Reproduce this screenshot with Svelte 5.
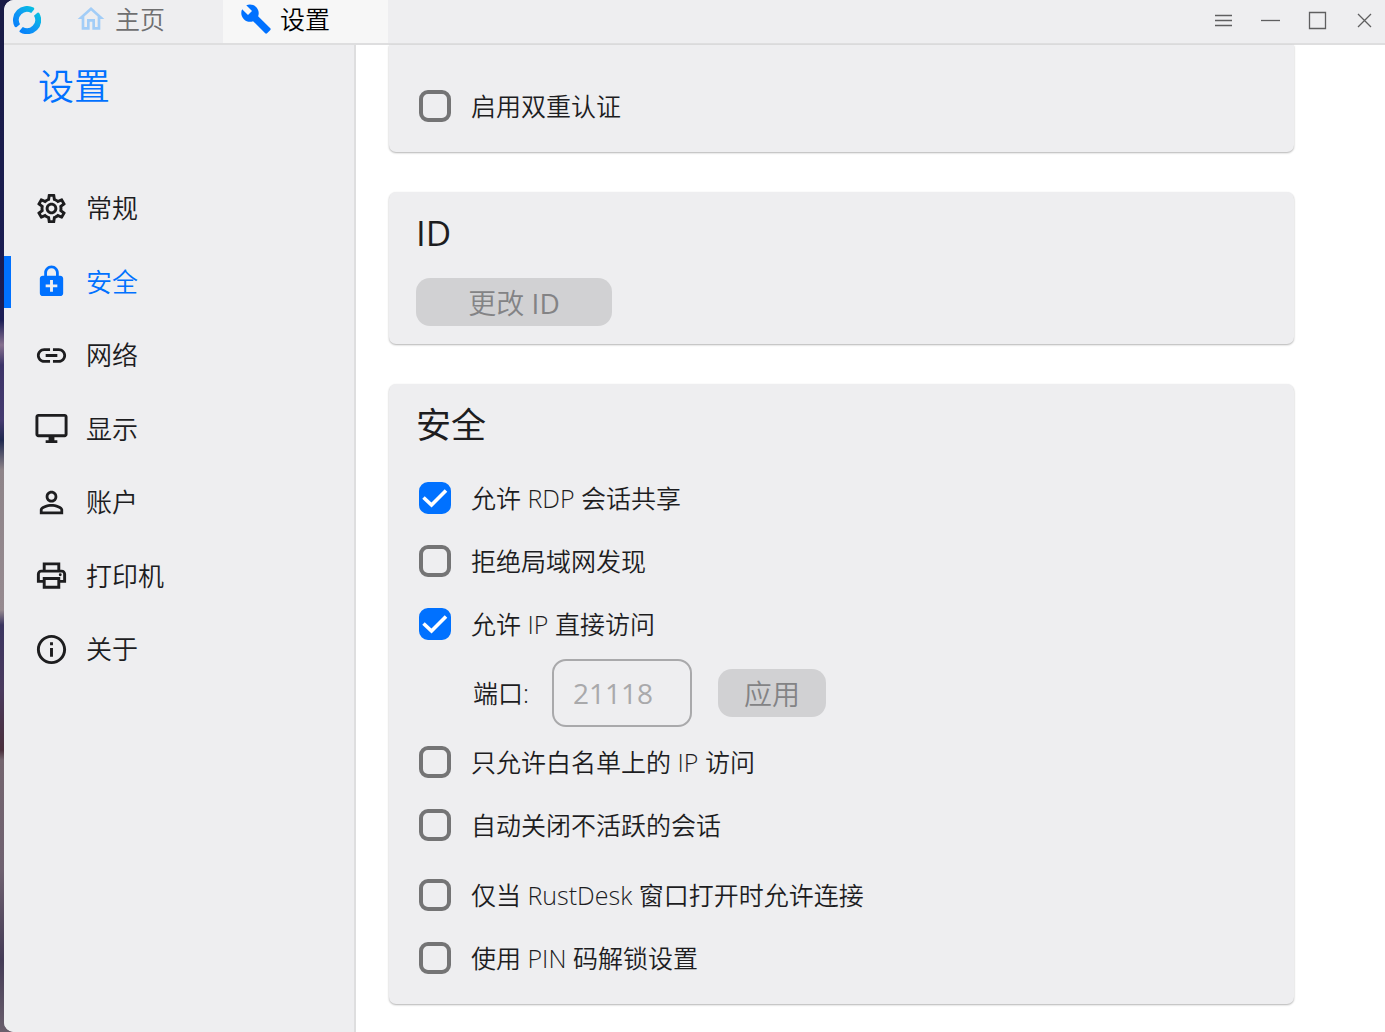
<script lang="ts">
  interface NavItem {
    id: string;
    label: string;
    path: string;
  }

  const navItems: NavItem[] = [
    {
      id: 'general',
      label: '常规',
      path: 'M19.43 12.98c.04-.32.07-.64.07-.98 0-.34-.03-.66-.07-.98l2.11-1.65c.19-.15.24-.42.12-.64l-2-3.46c-.09-.16-.26-.25-.44-.25-.06 0-.12.01-.17.03l-2.49 1c-.52-.4-1.08-.73-1.69-.98l-.38-2.65C14.46 2.18 14.25 2 14 2h-4c-.25 0-.46.18-.49.42l-.38 2.65c-.61.25-1.17.59-1.69.98l-2.49-1c-.06-.02-.12-.03-.18-.03-.17 0-.34.09-.43.25l-2 3.46c-.13.22-.07.49.12.64l2.11 1.65c-.04.32-.07.65-.07.98 0 .33.03.66.07.98l-2.11 1.65c-.19.15-.24.42-.12.64l2 3.46c.09.16.26.25.44.25.06 0 .12-.01.17-.03l2.49-1c.52.4 1.08.73 1.69.98l.38 2.65c.03.24.24.42.49.42h4c.25 0 .46-.18.49-.42l.38-2.65c.61-.25 1.17-.59 1.69-.98l2.49 1c.06.02.12.03.18.03.17 0 .34-.09.43-.25l2-3.46c.12-.22.07-.49-.12-.64l-2.11-1.65zm-1.98-1.71c.04.31.05.52.05.73 0 .21-.02.43-.05.73l-.14 1.13.89.7 1.08.84-.7 1.21-1.27-.51-1.04-.42-.9.68c-.43.32-.84.56-1.25.73l-1.06.43-.16 1.13-.2 1.35h-1.4l-.19-1.35-.16-1.13-1.06-.43c-.43-.18-.83-.41-1.23-.71l-.91-.7-1.06.43-1.27.51-.7-1.21 1.08-.84.89-.7-.14-1.13c-.03-.31-.05-.54-.05-.74s.02-.43.05-.73l.14-1.13-.89-.7-1.08-.84.7-1.21 1.27.51 1.04.42.9-.68c.43-.32.84-.56 1.25-.73l1.06-.43.16-1.13.2-1.35h1.39l.19 1.35.16 1.13 1.06.43c.43.18.83.41 1.23.71l.91.7 1.06-.43 1.27-.51.7 1.21-1.07.85-.89.7.14 1.13zM12 8c-2.21 0-4 1.79-4 4s1.79 4 4 4 4-1.79 4-4-1.79-4-4-4zm0 6c-1.1 0-2-.9-2-2s.9-2 2-2 2 .9 2 2-.9 2-2 2z',
    },
    {
      id: 'security',
      label: '安全',
      path: 'M18 8h-1V6c0-2.76-2.24-5-5-5S7 3.24 7 6v2H6c-1.1 0-2 .9-2 2v10c0 1.1.9 2 2 2h12c1.1 0 2-.9 2-2V10c0-1.1-.9-2-2-2zM8.9 6c0-1.71 1.39-3.1 3.1-3.1s3.1 1.39 3.1 3.1v2H8.9V6zM16 16h-3v3h-2v-3H8v-2h3v-3h2v3h3v2z',
    },
    {
      id: 'network',
      label: '网络',
      path: 'M3.9 12c0-1.71 1.39-3.1 3.1-3.1h4V7H7c-2.76 0-5 2.24-5 5s2.24 5 5 5h4v-1.9H7c-1.71 0-3.1-1.39-3.1-3.1zM8 13h8v-2H8v2zm9-6h-4v1.9h4c1.71 0 3.1 1.39 3.1 3.1s-1.39 3.1-3.1 3.1h-4V17h4c2.76 0 5-2.24 5-5s-2.24-5-5-5z',
    },
    {
      id: 'display',
      label: '显示',
      path: 'M21 2H3c-1.1 0-2 .9-2 2v12c0 1.1.9 2 2 2h7v2H8v2h8v-2h-2v-2h7c1.1 0 2-.9 2-2V4c0-1.1-.9-2-2-2zm0 14H3V4h18v12z',
    },
    {
      id: 'account',
      label: '账户',
      path: 'M12 5.9c1.16 0 2.1.94 2.1 2.1s-.94 2.1-2.1 2.1S9.9 9.16 9.9 8s.94-2.1 2.1-2.1m0 9c2.97 0 6.1 1.46 6.1 2.1v1.1H5.9V17c0-.64 3.13-2.1 6.1-2.1M12 4C9.79 4 8 5.79 8 8s1.79 4 4 4 4-1.79 4-4-1.79-4-4-4zm0 9c-2.67 0-8 1.34-8 4v3h16v-3c0-2.66-5.33-4-8-4z',
    },
    {
      id: 'printer',
      label: '打印机',
      path: 'M19 8h-1V3H6v5H5c-1.66 0-3 1.34-3 3v6h4v4h12v-4h4v-6c0-1.66-1.34-3-3-3zM8 5h8v3H8V5zm8 12v2H8v-4h8v2zm2-2v-2H6v2H4v-4c0-.55.45-1 1-1h14c.55 0 1 .45 1 1v4h-2zM18 10.5a1 1 0 1 0 0 2a1 1 0 1 0 0-2z',
    },
    {
      id: 'about',
      label: '关于',
      path: 'M11 7h2v2h-2zm0 4h2v6h-2zm1-9C6.48 2 2 6.48 2 12s4.48 10 10 10 10-4.48 10-10S17.52 2 12 2zm0 18c-4.41 0-8-3.59-8-8s3.59-8 8-8 8 3.59 8 8-3.59 8-8 8z',
    },
  ];

  let active = $state('security');
  let port = $state('');

  let options = $state({
    twoFactor: false,
    rdp: true,
    denyLan: false,
    directIp: true,
    whitelist: false,
    autoClose: false,
    windowOpen: false,
    pin: false,
  });

  type OptionKey = keyof typeof options;
</script>

{#snippet check(key: OptionKey, label: string)}
  <label class="check">
    <span class="box">
      <input type="checkbox" bind:checked={options[key]} />
      <svg viewBox="0 0 32 32" aria-hidden="true"><path d="M4.5 15.5L12.5 23L27 8.5" /></svg>
    </span>
    <span>{label}</span>
  </label>
{/snippet}

<div class="desktop">
  <div class="window">
    <header class="titlebar">
      <svg class="logo" viewBox="0 0 28 28" aria-hidden="true">
        <defs>
          <linearGradient id="ring" x1="0" y1="1" x2="1" y2="0">
            <stop offset="0" stop-color="#0071ff" />
            <stop offset="0.5" stop-color="#0f9bf3" />
            <stop offset="1" stop-color="#00d2d8" />
          </linearGradient>
        </defs>
        <path
          fill="url(#ring)"
          d="M20.5 1.6A14 14 0 0 0 1.6 20.5Q2.5 21.8 3.7 20.9L7 18.2A8.2 8.2 0 0 1 18.2 7L20.9 3.7Q21.8 2.5 20.5 1.6zM26.2 7A14 14 0 0 1 7 26.2Q5.9 25.4 6.8 24.4L9.8 21A8.2 8.2 0 0 0 21 9.8L24.4 6.8Q25.4 5.9 26.2 7z"
        />
      </svg>
      <nav class="tabs" aria-label="标签">
        <button class="tab">
          <svg viewBox="0 0 24 24" aria-hidden="true">
            <path d="M12 5.69l5 4.5V18h-2v-6H9v6H7v-7.81l5-4.5M12 3L2 12h3v8h6v-6h2v6h6v-8h3L12 3z" />
          </svg>
          主页
        </button>
        <button class="tab current">
          <svg viewBox="0 0 24 24" aria-hidden="true">
            <path d="M22.7 19l-9.1-9.1c.9-2.3.4-5-1.5-6.9-2-2-5-2.4-7.4-1.3L9 6 6 9 1.6 4.7C.4 7.1.9 10.1 2.9 12.1c1.9 1.9 4.6 2.4 6.9 1.5l9.1 9.1c.4.4 1 .4 1.4 0l2.3-2.3c.5-.4.5-1.1.1-1.4z" />
          </svg>
          设置
        </button>
      </nav>
      <div class="controls">
        <button aria-label="菜单">
          <svg viewBox="0 0 20 20"><path d="M2 5.5h17M2 10.5h17M2 15.5h17" /></svg>
        </button>
        <button aria-label="最小化">
          <svg viewBox="0 0 20 20"><path d="M1 10.5h19" /></svg>
        </button>
        <button aria-label="最大化">
          <svg viewBox="0 0 20 20"><path d="M2.5 2.5h16v16h-16z" /></svg>
        </button>
        <button aria-label="关闭">
          <svg viewBox="0 0 20 20"><path d="M4 4l13 13M17 4L4 17" /></svg>
        </button>
      </div>
    </header>

    <div class="body">
      <aside class="sidebar">
        <h1>设置</h1>
        <nav class="menu">
          {#each navItems as item (item.id)}
            <button class="menu-item" class:active={active === item.id} onclick={() => (active = item.id)}>
              <svg viewBox="0 0 24 24" aria-hidden="true"><path d={item.path} /></svg>
              {item.label}
            </button>
          {/each}
        </nav>
      </aside>

      <main class="content">
        <section class="card continued">
          {@render check('twoFactor', '启用双重认证')}
        </section>

        <section class="card">
          <h2>ID</h2>
          <button class="action wide" disabled>更改 <b>ID</b></button>
        </section>

        <section class="card">
          <h2>安全</h2>
          {@render check('rdp', '允许 RDP 会话共享')}
          {@render check('denyLan', '拒绝局域网发现')}
          {@render check('directIp', '允许 IP 直接访问')}
          <div class="port-row">
            <label for="port">端口:</label>
            <input id="port" type="text" placeholder="21118" bind:value={port} />
            <button class="action" disabled={!port}>应用</button>
          </div>
          {@render check('whitelist', '只允许白名单上的 IP 访问')}
          <div class="group">
            {@render check('autoClose', '自动关闭不活跃的会话')}
          </div>
          {@render check('windowOpen', '仅当 RustDesk 窗口打开时允许连接')}
          {@render check('pin', '使用 PIN 码解锁设置')}
        </section>
      </main>
    </div>
  </div>
</div>

<style>
  :global(body) {
    background: #fff;
  }

  .desktop {
    --accent: #0071ff;
    --panel: #eeeef0;
    --text: #1d1d1f;
    box-sizing: border-box;
    min-height: 100vh;
    padding-left: 4px;
    display: flex;
    font-family: 'Open Sans', 'Noto Sans CJK SC', sans-serif;
    font-weight: 350;
    color: var(--text);
    background: linear-gradient(
      #191b45 0,
      #1b1d55 320px,
      #86708f 345px,
      #3c3468 365px,
      #453a70 420px,
      #1f2950 440px,
      #8e8489 470px,
      #968a90 610px,
      #3b3560 625px,
      #4a3a5e 690px,
      #4a2f3c 750px,
      #74656f 760px,
      #6f6170 870px,
      #443b56 960px,
      #6b5f6d 1032px
    );
  }

  button {
    font: inherit;
    color: inherit;
    border: none;
    background: none;
    padding: 0;
    cursor: pointer;
  }

  svg {
    display: block;
    flex: none;
    fill: currentColor;
  }

  .window {
    flex: 1;
    min-width: 0;
    display: flex;
    flex-direction: column;
    background: #fff;
    border-radius: 10px 0 0 10px;
    overflow: hidden;
  }

  .titlebar {
    display: flex;
    align-items: center;
    height: 43px;
    background: var(--panel);
    border-bottom: 2px solid #dededf;
    box-sizing: content-box;
  }

  .logo {
    width: 28px;
    height: 28px;
    margin: 0 17px 4px 9px;
  }

  .tabs {
    display: flex;
    align-self: stretch;
  }

  .tab {
    display: flex;
    align-items: center;
    gap: 8px;
    width: 165px;
    padding: 0 0 5px 17px;
    font-size: 25px;
    line-height: 36px;
    color: #6f6f70;
  }

  .tab svg {
    width: 32px;
    height: 32px;
    color: #a2cdf7;
  }

  .tab.current {
    background: #f7f7f7;
    color: #000;
  }

  .tab.current svg {
    color: var(--accent);
  }

  .controls {
    display: flex;
    gap: 27px;
    margin: 0 11px 4px auto;
  }

  .controls svg {
    width: 20px;
    height: 20px;
    fill: none;
    stroke: #5f5f60;
    stroke-width: 1.3;
  }

  .body {
    flex: 1;
    display: flex;
  }

  .sidebar {
    box-sizing: border-box;
    flex: 0 0 352px;
    background: var(--panel);
    border-right: 2px solid #dededf;
  }

  h1 {
    margin: 0;
    padding: 16px 34px 0;
    font-size: 36px;
    font-weight: inherit;
    line-height: 52px;
    color: var(--accent);
  }

  .menu {
    display: flex;
    flex-direction: column;
    justify-content: space-between;
    height: 493px;
    margin-top: 69px;
  }

  .menu-item {
    display: flex;
    align-items: center;
    gap: 17px;
    height: 52px;
    padding-left: 23px;
    border-left: 7px solid transparent;
    font-size: 26px;
    line-height: 36px;
    text-align: left;
  }

  .menu-item svg {
    width: 35px;
    height: 35px;
  }

  .menu-item.active {
    color: var(--accent);
    border-left-color: var(--accent);
  }

  .content {
    flex: 1;
    min-width: 0;
    display: flex;
    flex-direction: column;
    gap: 40px;
    padding: 0 91px 28px 33px;
  }

  .card {
    padding: 0 27px 15px;
    background: var(--panel);
    border-radius: 7px;
    box-shadow: 0 1px 2px rgba(0, 0, 0, 0.3);
  }

  .card.continued {
    padding-top: 29px;
    border-radius: 0 0 7px 7px;
  }

  h2 {
    margin: 0;
    font-size: 35px;
    font-weight: 400;
    line-height: 82px;
  }

  .check {
    display: flex;
    align-items: center;
    gap: 20px;
    height: 63px;
    padding-left: 3px;
    font-size: 25px;
    line-height: 36px;
    cursor: pointer;
  }

  .box {
    position: relative;
    flex: none;
    width: 32px;
    height: 32px;
  }

  .box input {
    appearance: none;
    display: block;
    box-sizing: border-box;
    width: 32px;
    height: 32px;
    margin: 0;
    border: 4px solid #747475;
    border-radius: 9px;
    cursor: pointer;
  }

  .box input:checked {
    background: var(--accent);
    border-color: var(--accent);
  }

  .box svg {
    position: absolute;
    inset: 0;
    fill: none;
    stroke: #fff;
    stroke-width: 3.6;
    visibility: hidden;
    pointer-events: none;
  }

  .box input:checked + svg {
    visibility: visible;
  }

  .group {
    margin-bottom: 7px;
  }

  .port-row {
    display: flex;
    align-items: center;
    height: 75px;
    padding-left: 57px;
    font-size: 25px;
    line-height: 36px;
  }

  .port-row label {
    width: 79px;
  }

  .port-row input {
    box-sizing: border-box;
    width: 140px;
    height: 68px;
    margin-right: 26px;
    padding: 0 19px;
    border: 2px solid #a9a9ab;
    border-radius: 14px;
    background: transparent;
    font: inherit;
    font-size: 28px;
    font-weight: 400;
    color: var(--text);
  }

  .port-row input::placeholder {
    color: #a9a9ab;
    opacity: 1;
  }

  .action {
    min-width: 108px;
    height: 48px;
    padding-top: 2px;
    border-radius: 14px;
    background: #d1d1d3;
    font-size: 28px;
    line-height: 36px;
    color: #838385;
  }

  .action.wide {
    display: block;
    min-width: 196px;
    margin: 4px 0 3px;
  }

  .action b {
    font-weight: 500;
  }
</style>
